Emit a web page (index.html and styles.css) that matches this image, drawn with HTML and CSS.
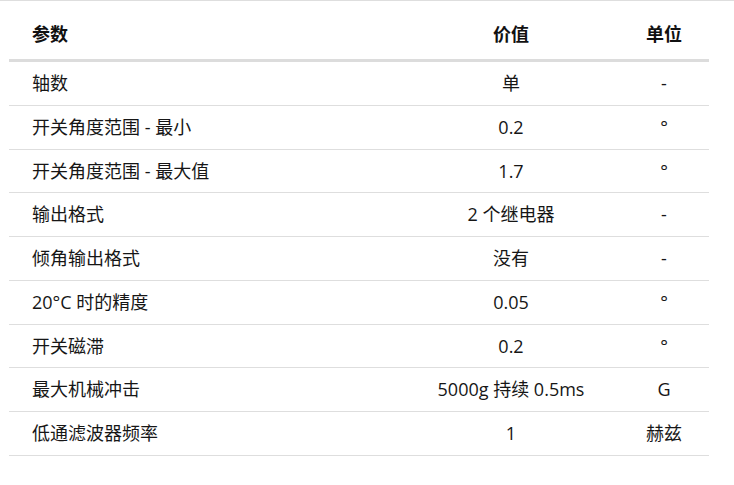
FILE: index.html
```html
<!DOCTYPE html>
<html lang="zh">
<head>
<meta charset="utf-8">
<title>参数</title>
<link rel="stylesheet" href="styles.css">
</head>
<body>
<div class="page">
  <table class="spec">
    <colgroup>
      <col class="c-param">
      <col class="c-value">
      <col class="c-unit">
    </colgroup>
    <thead>
      <tr><th class="param">参数</th><th>价值</th><th>单位</th></tr>
    </thead>
    <tbody>
      <tr><td class="param">轴数</td><td>单</td><td>-</td></tr>
      <tr><td class="param">开关角度范围 - 最小</td><td>0.2</td><td>°</td></tr>
      <tr><td class="param">开关角度范围 - 最大值</td><td>1.7</td><td>°</td></tr>
      <tr><td class="param">输出格式</td><td>2 个继电器</td><td>-</td></tr>
      <tr><td class="param">倾角输出格式</td><td>没有</td><td>-</td></tr>
      <tr><td class="param">20°C 时的精度</td><td>0.05</td><td>°</td></tr>
      <tr><td class="param">开关磁滞</td><td>0.2</td><td>°</td></tr>
      <tr><td class="param">最大机械冲击</td><td>5000g 持续 0.5ms</td><td>G</td></tr>
      <tr><td class="param">低通滤波器频率</td><td>1</td><td>赫兹</td></tr>
    </tbody>
  </table>
</div>
</body>
</html>
```
FILE: styles.css
```css
html, body {
  margin: 0;
  padding: 0;
  background: #fff;
}
.page {
  border-top: 1px solid #dedede;
  padding: 9px 0 0 9px;
  font-family: "Open Sans", "Noto Sans CJK SC", sans-serif;
  font-size: 18px;
  color: #161616;
}
.spec {
  width: 700px;
  border-collapse: collapse;
  table-layout: fixed;
}
.c-param { width: 394px; }
.c-value { width: 216px; }
.c-unit { width: 90px; }
.spec th {
  font-weight: 700;
  color: #111;
  text-align: center;
  padding: 12px 0;
  line-height: 25px;
  border-bottom: 3px solid #dcdcdc;
}
.spec td {
  text-align: center;
  padding: 10px 0;
  line-height: 22.75px;
  border-bottom: 1px solid #dedede;
}
.spec .param {
  text-align: left;
  padding-left: 23px;
}
```
